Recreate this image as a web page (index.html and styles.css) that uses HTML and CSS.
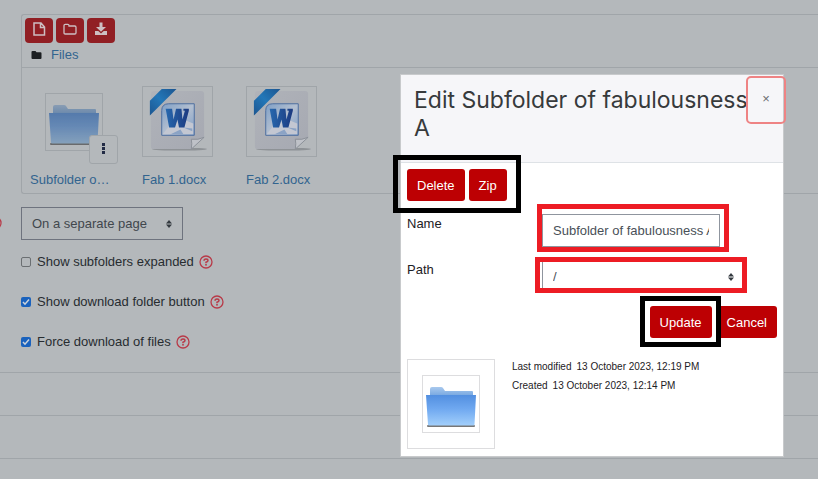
FILE: index.html
```html
<!DOCTYPE html>
<html lang="en">
<head>
    <meta charset="UTF-8">
    <meta name="viewport" content="width=device-width, initial-scale=1.0">
    <title>Edit folder</title>
    <link rel="stylesheet" href="styles.css">
</head>
<body>
    <svg class="defs" width="0" height="0" aria-hidden="true">
        <defs>
            <linearGradient id="folderFront" x1="0" y1="0" x2="0" y2="1">
                <stop offset="0" stop-color="#528fe0"/>
                <stop offset="0.45" stop-color="#6fa8f0"/>
                <stop offset="1" stop-color="#a2cffb"/>
            </linearGradient>
            <linearGradient id="folderBack" x1="0" y1="0" x2="0" y2="1">
                <stop offset="0" stop-color="#a9c9ee"/>
                <stop offset="1" stop-color="#6a9fdd"/>
            </linearGradient>
            <linearGradient id="paper" x1="0" y1="0" x2="1" y2="1">
                <stop offset="0" stop-color="#b0b3b9"/>
                <stop offset="1" stop-color="#a6a9b2"/>
            </linearGradient>
            <linearGradient id="ribbon" x1="0" y1="1" x2="1" y2="0">
                <stop offset="0" stop-color="#1c5590"/>
                <stop offset="0.5" stop-color="#2377b8"/>
                <stop offset="1" stop-color="#1c5590"/>
            </linearGradient>
            <linearGradient id="badge" x1="0" y1="0" x2="1" y2="1">
                <stop offset="0" stop-color="#7f9fc6"/>
                <stop offset="0.5" stop-color="#b3bfd0"/>
                <stop offset="1" stop-color="#7d9dc6"/>
            </linearGradient>
            <linearGradient id="letter" x1="0" y1="0" x2="1" y2="0">
                <stop offset="0" stop-color="#2768ae"/>
                <stop offset="1" stop-color="#1c3a80"/>
            </linearGradient>
            <symbol id="folder" viewBox="0 0 56 56">
                <rect x="4" y="49" width="48" height="2" rx="1" fill="#555" opacity="0.8"/>
                <path d="M7 22V13q0-2 2-2h9q1.500 0 2 1l2 3h27q1 0 1 1V22z" fill="url(#folderBack)"/>
                <path d="M3 19h50l-1.500 29.500q0 1-1 1H6q-1 0-1-1z" fill="url(#folderFront)"/>
            </symbol>
            <symbol id="word" viewBox="0 0 70 70">
                <ellipse cx="37" cy="63" rx="28" ry="1.500" fill="#7d8186" opacity="0.7"/>
                <path d="M11 4h48q3 0 3 3v44L49 63H11q-3 0-3-3V7q0-3 3-3z" fill="url(#paper)"/>
                <path d="M49 63q1-6 0-10 7 1 13-2z" fill="#bfc2c8" stroke="#8b9098" stroke-width="1"/>
                <path d="M19 2h15L7 29V14z" fill="url(#ribbon)"/>
                <path d="M26 17h26v32H19V24q0-7 7-7z" fill="url(#badge)" stroke="#4d6e9f" stroke-width="1"/>
                <path d="M20 48l7-9 14-6 10 4v11z" fill="#c3c7d2"/>
                <path d="M28 48l10-5 3 5zM41 41l9 4v-3z" fill="#8ba3c5"/>
                <path d="M23 22h6.500l1.500 11 2.500-11h5.500l1 11 2.500-9h-1.500v-2h5.500v2l-4.500 17h-5.500l-1.500-8-2.500 8h-6z" fill="url(#letter)"/>
            </symbol>
            <symbol id="help" viewBox="0 0 14 14">
                <circle cx="7" cy="7" r="6" fill="none" stroke="#b83a48" stroke-width="1.300"/>
                <path d="M5 5.700Q5 3.900 7 3.900T9 5.600Q9 6.700 7 7.300V8.200" fill="none" stroke="#b83a48" stroke-width="1.500"/>
                <rect x="6.200" y="9" width="1.600" height="1.600" fill="#b83a48"/>
            </symbol>
        </defs>
    </svg>

    <main class="page">
        <div class="settings">
            <section class="filemanager">
                <header class="fm-head">
                    <div class="fm-toolbar">
                        <button type="button" class="tool" aria-label="Add file">
                            <svg width="16" height="16" viewBox="0 0 16 16" fill="none" stroke="#cdbfc2" stroke-width="1.500"><path d="M3 2h7l3.500 4v8H3zM9.500 2v4.500h4"/></svg>
                        </button>
                        <button type="button" class="tool" aria-label="Create folder">
                            <svg width="16" height="16" viewBox="0 0 16 16" fill="none" stroke="#cdbfc2" stroke-width="1.300"><path d="M2 4.500q0-1.200 1.200-1.200h2.600Q7 3.300 7 4.500V5h5.800Q14 5 14 6.200v5.600q0 1.200-1.200 1.200H3.200Q2 13 2 11.800z"/></svg>
                        </button>
                        <button type="button" class="tool" aria-label="Download all">
                            <svg width="16" height="16" viewBox="0 0 16 16" fill="#cdbfc2"><path d="M6.500 1.500h3V6H13L8 10.800 3 6h3.500zM2 10h3.300L8 12.500l2.700-2.500H14v4H2z"/></svg>
                        </button>
                    </div>
                    <nav class="fm-path">
                        <svg width="11" height="10" viewBox="0 0 11 10"><path d="M.5 2q0-1 1-1h3l1 1.200h4q1 0 1 1V8q0 1-1 1h-8q-1 0-1-1z" fill="#1b1f22"/></svg>
                        <a href="#">Files</a>
                    </nav>
                </header>
                <div class="fm-files">
                    <div class="file">
                        <div class="thumb-area">
                            <div class="thumb"><svg class="dim" width="56" height="56"><use href="#folder"/></svg></div>
                            <button type="button" class="more" aria-label="Options"><span></span><span></span><span></span></button>
                        </div>
                        <a href="#">Subfolder o…</a>
                    </div>
                    <div class="file">
                        <div class="thumb-area">
                            <div class="thumb"><svg width="69" height="69"><use href="#word"/></svg></div>
                        </div>
                        <a href="#">Fab 1.docx</a>
                    </div>
                    <div class="file">
                        <div class="thumb-area">
                            <div class="thumb"><svg width="69" height="69"><use href="#word"/></svg></div>
                        </div>
                        <a href="#">Fab 2.docx</a>
                    </div>
                </div>
            </section>

            <div class="display-row">
                <svg class="help edge-help" width="14" height="14"><use href="#help"/></svg>
                <select class="select display" aria-label="Display folder contents">
                    <option>On a separate page</option>
                </select>
            </div>
            <div class="option">
                <input type="checkbox" id="showexpanded">
                <label for="showexpanded">Show subfolders expanded</label>
                <svg class="help" width="14" height="14"><use href="#help"/></svg>
            </div>
            <div class="option">
                <input type="checkbox" id="showdownload" checked>
                <label for="showdownload">Show download folder button</label>
                <svg class="help" width="14" height="14"><use href="#help"/></svg>
            </div>
            <div class="option">
                <input type="checkbox" id="forcedownload" checked>
                <label for="forcedownload">Force download of files</label>
                <svg class="help" width="14" height="14"><use href="#help"/></svg>
            </div>
        </div>
        <div class="section"></div>
        <div class="section"></div>
        <div class="section"></div>
    </main>

    <div class="dialog" role="dialog" aria-labelledby="dialogTitle">
        <header class="dialog-head">
            <h3 id="dialogTitle">Edit Subfolder of fabulousness A</h3>
            <button type="button" class="close" aria-label="Close">×</button>
        </header>
        <form class="dialog-body">
            <div class="actions marked mark-actions">
                <button type="button" class="btn">Delete</button>
                <button type="button" class="btn">Zip</button>
            </div>
            <div class="field">
                <label for="name">Name</label>
                <div class="marked mark-name">
                    <input type="text" id="name" value="Subfolder of fabulousness A">
                </div>
            </div>
            <div class="field">
                <label for="path">Path</label>
                <div class="marked mark-path">
                    <select class="select" id="path">
                        <option>/</option>
                    </select>
                </div>
            </div>
            <div class="buttons">
                <div class="marked mark-update">
                    <button type="button" class="btn">Update</button>
                </div>
                <button type="button" class="btn">Cancel</button>
            </div>
            <div class="info">
                <div class="preview">
                    <div class="thumb"><svg width="56" height="56"><use href="#folder"/></svg></div>
                </div>
                <dl>
                    <div><dt>Last modified</dt><dd>13 October 2023, 12:19 PM</dd></div>
                    <div><dt>Created</dt><dd>13 October 2023, 12:14 PM</dd></div>
                </dl>
            </div>
        </form>
    </div>
</body>
</html>
```
FILE: styles.css
```css
* {
    box-sizing: border-box;
}
body {
    margin: 0;
    min-height: 100vh;
    overflow: hidden;
    position: relative;
    background-color: #b4b8bb;
    color: #272c30;
    font-family: "Liberation Sans", Arial, sans-serif;
    font-size: 13px;
    line-height: 20px;
}
button, input, select {
    font-family: inherit;
    font-size: inherit;
    margin: 0;
}
a {
    color: #32648f;
    text-decoration: none;
}
svg {
    display: block;
}
.defs {
    position: absolute;
}
.settings {
    padding: 14px 0 20px 21px;
}

/* File manager */
.filemanager {
    border: 1px solid #a0a5a9;
    border-right: 0;
    border-radius: 3px 0 0 3px;
}
.fm-head {
    padding: 3px 3px 2px;
    border-bottom: 1px solid #a0a5a9;
}
.fm-toolbar {
    display: flex;
    gap: 3px;
}
.tool {
    display: flex;
    justify-content: center;
    width: 28px;
    height: 25px;
    padding: 3px 0;
    background-color: #911f24;
    border: 0;
    border-radius: 4px;
}
.fm-path {
    display: flex;
    align-items: center;
    gap: 9px;
    padding: 2px 0 0 6px;
}
.fm-files {
    display: flex;
    gap: 33px;
    padding: 18px 8px 3px;
}
.file {
    width: 71px;
    white-space: nowrap;
}
.file:first-child {
    width: 79px;
}
.thumb-area {
    display: flex;
    align-items: center;
    justify-content: center;
    position: relative;
    height: 71px;
    margin-bottom: 13px;
}
.thumb-area:has(.more) {
    width: 88px;
}
.thumb {
    border: 1px solid #a0a5a9;
}
.dim {
    filter: brightness(0.75);
    opacity: 0.8;
}
.more {
    display: flex;
    flex-direction: column;
    align-items: center;
    justify-content: center;
    gap: 1px;
    position: absolute;
    right: 0;
    bottom: -7px;
    width: 29px;
    height: 29px;
    padding: 0 0 3px;
    background-color: #b4b8bb;
    border: 1px solid #a0a5a9;
    border-radius: 3px;
}
.more span {
    width: 3px;
    height: 3px;
    background-color: #222b45;
}

/* Settings */
.display-row {
    position: relative;
    padding: 13px 0 12px;
}
.edge-help {
    position: absolute;
    left: -33px;
    top: 22px;
}
.select {
    appearance: none;
    display: block;
    height: 33px;
    padding: 0 10px;
    border: 1px solid #8f959e;
    color: #495057;
    background: url('data:image/svg+xml,<svg xmlns="http://www.w3.org/2000/svg" viewBox="0 0 6 8"><path fill="%23343a40" d="M3 0L0 3.500h6zM3 8L0 4.500h6z"/></svg>') no-repeat right 10px center / 6px 8px;
}
.display {
    width: 162px;
    border-color: #6e737e;
    color: #41474d;
}
.option {
    display: flex;
    align-items: center;
    height: 20px;
    margin-bottom: 20px;
}
.option:last-child {
    margin-bottom: 0;
}
.option input {
    appearance: none;
    width: 10px;
    height: 10px;
    margin-right: 6px;
    border: 1px solid #6b6f72;
    border-radius: 2px;
}
.option input:checked {
    border: 0;
    background: #1a62bd url('data:image/svg+xml,<svg xmlns="http://www.w3.org/2000/svg" viewBox="0 0 10 10"><path fill="none" stroke="%23ccd3dc" stroke-width="1.500" d="M2 5l2 2.200L8 2.500"/></svg>');
}
.option .help {
    margin-left: 5px;
}
.section {
    height: 43px;
    border-top: 1px solid #a0a5a9;
}

/* Dialog */
.dialog {
    position: absolute;
    top: 74px;
    right: 34px;
    width: 384px;
    background-color: #fff;
    border: 1px solid #c8cacc;
    color: #1d2125;
}
.dialog-head {
    position: relative;
    padding: 11px 30px 20px 13px;
    background-color: #f6f6f9;
    border-bottom: 1px solid #dee2e6;
}
.dialog-head h3 {
    margin: 0;
    color: #373a3c;
    font-family: Inter, sans-serif;
    font-size: 23px;
    font-weight: 400;
    line-height: 28px;
}
.close {
    position: absolute;
    top: 1px;
    right: -3px;
    width: 40px;
    height: 48px;
    padding: 0 0 4px;
    background: none;
    border: 2px solid #ee8384;
    border-radius: 5px;
    color: #6a6d70;
}
.dialog-body {
    padding: 6px 6px 7px;
}
.btn {
    height: 32px;
    padding: 0 10px;
    background-color: #bd0003;
    border: 0;
    border-radius: 3px;
    color: #fff;
}
.actions {
    display: flex;
    gap: 4px;
    width: fit-content;
    margin-bottom: 13px;
}
.field {
    display: grid;
    grid-template-columns: 135px 1fr;
    margin-bottom: 13px;
}
.field input {
    display: block;
    width: 178px;
    height: 33px;
    padding: 0 10px;
    border: 1px solid #8f959e;
    color: #495057;
}
.field .select {
    width: 203px;
}
.buttons {
    display: flex;
    justify-content: flex-end;
    gap: 5px;
    margin-bottom: 21px;
}

/* Frames drawn round the controls */
.marked {
    position: relative;
}
.marked::after {
    content: "";
    position: absolute;
    border: 5px solid #000;
    pointer-events: none;
}
.mark-actions::after {
    inset: -14px -14px -12px -14px;
}
.mark-name::after {
    inset: -10px 48px -5px -5px;
    border-color: #ed1c24;
}
.mark-path::after {
    inset: -3px 30px 0 -7px;
    border-color: #ed1c24;
}
.mark-update::after {
    inset: -10px -9px -9px -10px;
    z-index: 1;
}

.info {
    display: flex;
    gap: 17px;
}
.preview {
    display: flex;
    align-items: center;
    justify-content: center;
    width: 88px;
    height: 90px;
}
.preview, .preview .thumb {
    border: 1px solid #dddddf;
}
.info dl {
    margin: 0;
    font-size: 10px;
    line-height: 15px;
}
.info dl div {
    display: flex;
    gap: 5px;
    margin-bottom: 4px;
}
.info dd {
    margin: 0;
}
```
